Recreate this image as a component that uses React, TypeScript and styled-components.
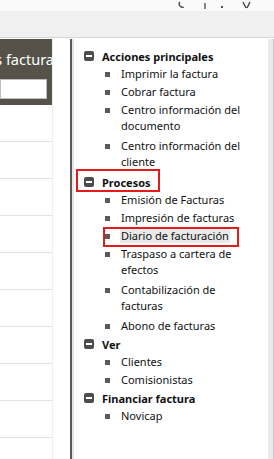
import React from 'react';
import styled, { createGlobalStyle } from 'styled-components';

const GlobalStyle = createGlobalStyle`
  html, body {
    margin: 0;
    padding: 0;
    overflow: hidden;
    background: #ffffff;
  }
  body {
    font-family: 'Noto Sans', 'Open Sans', sans-serif;
  }
`;

const Window = styled.div`
  width: 274px;
  height: 459px;
  display: flex;
  flex-direction: column;
  overflow: hidden;
`;

const TitleStrip = styled.div`
  height: 11px;
  background: #fafafa;
  position: relative;
`;

const Controls = styled.svg`
  position: absolute;
  left: 170px;
  top: 0;
`;

const Toolbar = styled.div`
  height: 26px;
  background: #f0f0f0;
  border-bottom: 1px solid #d6d6d6;
`;

const Main = styled.div`
  flex: 1;
  display: flex;
  border-top: 1px solid #fcfcfc;
  min-height: 0;
`;

const ListPane = styled.div`
  width: 52px;
  display: flex;
  flex-direction: column;
  overflow: hidden;
`;

const ListHeader = styled.div`
  height: 66px;
  background: #56524a;
  display: flex;
  flex-direction: column;
  align-items: flex-end;
`;

const HeaderTitle = styled.div`
  height: 40px;
  display: flex;
  align-items: center;
  white-space: nowrap;
  color: #ffffff;
  font-size: 14.5px;
  margin-right: -2px;
`;

const SearchBox = styled.div`
  align-self: flex-start;
  width: 45px;
  height: 18px;
  background: #ffffff;
  border: 1px solid #bdbdbd;
`;

const ListRow = styled.div`
  height: 36px;
  flex-shrink: 0;
  border-bottom: 1px solid #e2e2e2;
  background: #ffffff;
`;

const Spacer = styled.div`
  width: 17px;
  border-left: 1px solid #e3f6f8;
  background: #ffffff;
`;

const Splitter = styled.div`
  width: 2px;
  background: #5a5a5a;
  border-right: 2px solid #e6e6e6;
`;

const TreePanel = styled.div`
  flex: 1;
  background: #ffffff;
  padding-top: 8px;
  font-size: 11px;
  color: #111111;
`;

const ScrollStrip = styled.div`
  width: 5px;
  background: #eaeaed;
  border-right: 1px solid #c9c9cc;
`;

const Group = styled.div`
  display: flex;
  flex-direction: column;
`;

const GroupHeader = styled.div`
  position: relative;
  display: flex;
  align-items: center;
  height: 18px;
  padding-left: 10px;
  font-weight: 700;
  white-space: nowrap;
`;

const Collapse = styled.span`
  width: 10px;
  height: 10px;
  border-radius: 2px;
  background: #4d4d4d;
  margin-right: 8px;
  display: flex;
  align-items: center;
  justify-content: center;
  &::after {
    content: '';
    width: 6px;
    height: 2px;
    background: #ffffff;
  }
`;

const Item = styled.div<{ $multi: boolean }>`
  position: relative;
  display: flex;
  align-items: flex-start;
  padding: 1px 0 ${p => (p.$multi ? 3 : 1)}px 31px;
  line-height: 16px;
`;

const Bullet = styled.span`
  width: 5px;
  height: 5px;
  background: #5a5a5a;
  margin: 6px 11px 0 0;
  flex-shrink: 0;
`;

const Label = styled.span<{ $selected?: boolean }>`
  white-space: nowrap;
  padding: 0 1px;
  margin-left: -1px;
  background: ${p => (p.$selected ? '#e9e9e9' : 'transparent')};
`;

const Mark = styled.div<{ $left: number; $top: number; $w: number; $h: number }>`
  position: absolute;
  left: ${p => p.$left}px;
  top: ${p => p.$top}px;
  width: ${p => p.$w}px;
  height: ${p => p.$h}px;
  border: 2px solid #e31b1b;
  box-sizing: border-box;
  pointer-events: none;
`;

type TreeItem = { lines: string[]; selected?: boolean; marked?: boolean };
type TreeGroup = { title: string; marked?: boolean; items: TreeItem[] };

const groups: TreeGroup[] = [
  {
    title: 'Acciones principales',
    items: [
      { lines: ['Imprimir la factura'] },
      { lines: ['Cobrar factura'] },
      { lines: ['Centro información del', 'documento'] },
      { lines: ['Centro información del', 'cliente'] },
    ],
  },
  {
    title: 'Procesos',
    marked: true,
    items: [
      { lines: ['Emisión de Facturas'] },
      { lines: ['Impresión de facturas'] },
      { lines: ['Diario de facturación'], selected: true, marked: true },
      { lines: ['Traspaso a cartera de', 'efectos'] },
      { lines: ['Contabilización de', 'facturas'] },
      { lines: ['Abono de facturas'] },
    ],
  },
  {
    title: 'Ver',
    items: [{ lines: ['Clientes'] }, { lines: ['Comisionistas'] }],
  },
  {
    title: 'Financiar factura',
    items: [{ lines: ['Novicap'] }],
  },
];

const rows = Array.from({ length: 9 }, (_, i) => i);

export default function App() {
  return (
    <Window>
      <GlobalStyle />
      <TitleStrip>
        <Controls width="90" height="11" viewBox="0 0 90 11">
          <path d="M10 2 Q8 4 10 6 Q12 8 14 7" stroke="#444" strokeWidth="1.2" fill="none" />
          <path d="M35 3 V9" stroke="#555" strokeWidth="1.4" />
          <rect x="51" y="6" width="2" height="2" fill="#555" />
          <path d="M73 2 L76 8 M80 2 L77 8" stroke="#444" strokeWidth="1.4" />
        </Controls>
      </TitleStrip>
      <Toolbar />
      <Main>
        <ListPane>
          <ListHeader>
            <HeaderTitle>Clientes factura</HeaderTitle>
            <SearchBox />
          </ListHeader>
          {rows.map(r => (
            <ListRow key={r} />
          ))}
        </ListPane>
        <Spacer />
        <Splitter />
        <TreePanel>
          {groups.map(g => (
            <Group key={g.title}>
              <GroupHeader>
                <Collapse />
                {g.title}
                {g.marked && <Mark $left={2} $top={-4} $w={84} $h={23} />}
              </GroupHeader>
              {g.items.map(it => (
                <Item key={it.lines[0]} $multi={it.lines.length > 1}>
                  <Bullet />
                  <div>
                    {it.lines.map(l => (
                      <div key={l}>
                        <Label $selected={it.selected}>{l}</Label>
                      </div>
                    ))}
                  </div>
                  {it.marked && <Mark $left={29} $top={0} $w={136} $h={20} />}
                </Item>
              ))}
            </Group>
          ))}
        </TreePanel>
        <ScrollStrip />
      </Main>
    </Window>
  );
}
